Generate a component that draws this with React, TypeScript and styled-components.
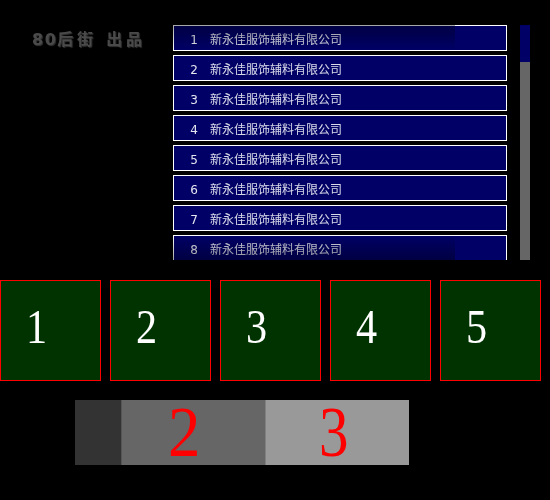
import React from "react";
import styled, { createGlobalStyle } from "styled-components";

const Global = createGlobalStyle`
  html, body { margin: 0; padding: 0; background: #000; }
  body { width: 550px; height: 500px; overflow: hidden; }
`;

const Page = styled.div`
  width: 550px;
  height: 500px;
  display: flex;
  flex-direction: column;
  background: #000;
`;

const Top = styled.div`
  display: flex;
  height: 235px;
  margin-top: 25px;
`;

const Title = styled.div`
  width: 173px;
  flex: none;
  box-sizing: border-box;
  padding: 5px 0 0 32px;
  font: bold 16px/20px "DejaVu Sans", "Noto Sans CJK SC", sans-serif;
  letter-spacing: 3.8px;
  color: #4a4a4a;
  text-shadow: 1px 1px 1px #333;
  white-space: pre;
  filter: blur(0.4px);
`;

const TitleDigits = styled.span`
  letter-spacing: 1.5px;
`;

const ListClip = styled.div`
  position: relative;
  width: 334px;
  flex: none;
  overflow: hidden;
`;

const List = styled.div`
  display: flex;
  flex-direction: column;
  gap: 4px;
`;

const Row = styled.div`
  height: 26px;
  flex: none;
  box-sizing: border-box;
  border: 1px solid #fff;
  background: #006;
  display: flex;
  align-items: center;
  padding-top: 3px;
  color: #fff;
`;

const Num = styled.span`
  width: 36px;
  box-sizing: border-box;
  flex: none;
  padding-right: 12px;
  text-align: right;
  font: 12px/20px "DejaVu Sans", sans-serif;
  opacity: 0.9;
`;

const Name = styled.span`
  font: 12px/20px "Liberation Sans", "Noto Sans CJK SC", sans-serif;
  opacity: 0.85;
`;

const Fade = styled.div<{ $edge: "top" | "bottom" }>`
  position: absolute;
  left: 0;
  width: 282px;
  height: 25px;
  ${(p) => (p.$edge === "top" ? "top: 0;" : "bottom: 0;")}
  background: linear-gradient(
    ${(p) => (p.$edge === "top" ? "to bottom" : "to top")},
    rgba(0, 0, 0, 0.35),
    rgba(0, 0, 0, 0)
  );
`;

const Scrollbar = styled.div`
  width: 10px;
  margin-left: 13px;
  flex: none;
  background: #666;
`;

const Thumb = styled.div`
  height: 37px;
  background: #006;
`;

const Boxes = styled.div`
  display: flex;
  gap: 9px;
  margin-top: 20px;
`;

const Box = styled.div`
  width: 101px;
  height: 101px;
  box-sizing: border-box;
  border: 1px solid #f00;
  background: #030;
  color: #fff;
  font: 48px/92px "Liberation Serif", serif;
  padding-left: 25px;
`;

const Digit = styled.span<{ $squeeze: number }>`
  display: inline-block;
  transform: scaleX(${(p) => p.$squeeze});
  transform-origin: left center;
`;

const Strip = styled.div`
  display: flex;
  width: 334px;
  height: 65px;
  margin: 19px 0 0 75px;
`;

const Segment = styled.div<{ $w: number; $bg: string; $edge?: string; $pad?: number }>`
  width: ${(p) => p.$w}px;
  flex: none;
  box-sizing: border-box;
  background: ${(p) => p.$bg};
  border-left: ${(p) => (p.$edge ? `1px solid ${p.$edge}` : "none")};
  padding-left: ${(p) => p.$pad ?? 0}px;
  color: #f00;
  font: 72px/65px "Liberation Serif", serif;
`;

const rows = [1, 2, 3, 4, 5, 6, 7, 8];

export default function App() {
  return (
    <Page>
      <Global />
      <Top>
        <Title>
          <TitleDigits>80</TitleDigits>后街 出品
        </Title>
        <ListClip>
          <List>
            {rows.map((n) => (
              <Row key={n}>
                <Num>{n}</Num>
                <Name>新永佳服饰辅料有限公司</Name>
              </Row>
            ))}
          </List>
          <Fade $edge="top" />
          <Fade $edge="bottom" />
        </ListClip>
        <Scrollbar>
          <Thumb />
        </Scrollbar>
      </Top>
      <Boxes>
        {[1, 2, 3, 4, 5].map((n) => (
          <Box key={n}>
            <Digit $squeeze={0.88}>{n}</Digit>
          </Box>
        ))}
      </Boxes>
      <Strip>
        <Segment $w={46} $bg="#333" />
        <Segment $w={144} $bg="#666" $edge="#555" $pad={46}>
          <Digit $squeeze={0.9}>2</Digit>
        </Segment>
        <Segment $w={144} $bg="#999" $edge="#808080" $pad={53}>
          <Digit $squeeze={0.82}>3</Digit>
        </Segment>
      </Strip>
    </Page>
  );
}
